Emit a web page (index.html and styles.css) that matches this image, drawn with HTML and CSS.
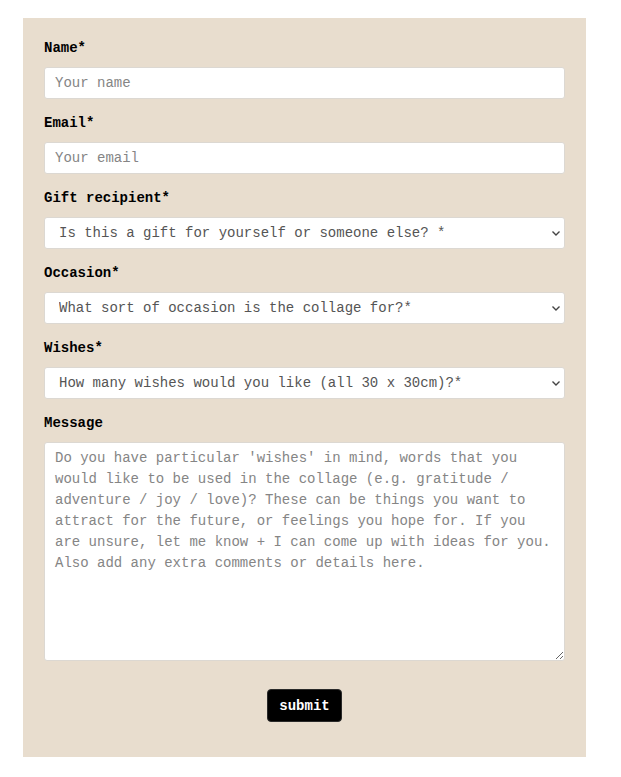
FILE: index.html
```html
<!DOCTYPE html>
<html lang="en">
<head>
<meta charset="utf-8">
<title>Collage order form</title>
<link rel="stylesheet" href="styles.css">
</head>
<body>
<div class="page">
  <form class="order-form">
    <div class="field">
      <label class="label" for="name">Name*</label>
      <input class="control" id="name" type="text" placeholder="Your name">
    </div>
    <div class="field">
      <label class="label" for="email">Email*</label>
      <input class="control" id="email" type="email" placeholder="Your email">
    </div>
    <div class="field">
      <label class="label" for="recipient">Gift recipient*</label>
      <div class="select-wrap">
        <select class="control select" id="recipient">
          <option>Is this a gift for yourself or someone else? *</option>
        </select>
        <svg class="chevron" width="8" height="5" viewBox="0 0 8 5"><path d="M0.5 0.5 L4 4 L7.5 0.5" fill="none" stroke="#444" stroke-width="1.4"/></svg>
      </div>
    </div>
    <div class="field">
      <label class="label" for="occasion">Occasion*</label>
      <div class="select-wrap">
        <select class="control select" id="occasion">
          <option>What sort of occasion is the collage for?*</option>
        </select>
        <svg class="chevron" width="8" height="5" viewBox="0 0 8 5"><path d="M0.5 0.5 L4 4 L7.5 0.5" fill="none" stroke="#444" stroke-width="1.4"/></svg>
      </div>
    </div>
    <div class="field">
      <label class="label" for="wishes">Wishes*</label>
      <div class="select-wrap">
        <select class="control select" id="wishes">
          <option>How many wishes would you like (all 30 x 30cm)?*</option>
        </select>
        <svg class="chevron" width="8" height="5" viewBox="0 0 8 5"><path d="M0.5 0.5 L4 4 L7.5 0.5" fill="none" stroke="#444" stroke-width="1.4"/></svg>
      </div>
    </div>
    <div class="field">
      <label class="label" for="message">Message</label>
      <textarea class="control textarea" id="message" placeholder="Do you have particular 'wishes' in mind, words that you would like to be used in the collage (e.g. gratitude / adventure / joy / love)? These can be things you want to attract for the future, or feelings you hope for. If you are unsure, let me know + I can come up with ideas for you. Also add any extra comments or details here."></textarea>
    </div>
    <div class="actions">
      <button class="submit" type="submit">submit</button>
    </div>
  </form>
</div>
</body>
</html>
```

FILE: styles.css
```css
html, body {
  margin: 0;
  padding: 0;
  background: #ffffff;
}

body {
  font-family: "Liberation Mono", "Courier New", monospace;
  font-size: 14px;
  color: #000;
}

.page {
  padding: 18px 35px 20px 23px;
}

.order-form {
  width: 563px;
  box-sizing: border-box;
  background: #e8ddce;
  padding: 22px 21px 35px 21px;
  display: flex;
  flex-direction: column;
}

.field {
  display: flex;
  flex-direction: column;
  margin-bottom: 16px;
}

.label {
  display: block;
  font-weight: bold;
  font-size: 14px;
  line-height: 16px;
  margin-bottom: 11px;
  color: #000;
}

.control {
  box-sizing: border-box;
  width: 100%;
  height: 32px;
  margin: 0;
  border: 1px solid #dcd8d2;
  border-radius: 3px;
  background: #ffffff;
  font-family: "Liberation Mono", "Courier New", monospace;
  font-size: 14px;
  color: #444;
  padding: 0 10px;
  outline: none;
}

.control::placeholder {
  color: #858585;
}

.select-wrap {
  position: relative;
}

.select {
  appearance: none;
  -webkit-appearance: none;
  padding: 0 30px 0 14px;
  color: #555;
}

.chevron {
  position: absolute;
  right: 5px;
  top: 14px;
  pointer-events: none;
}

.textarea {
  height: 219px;
  padding: 5px 8px 2px 10px;
  line-height: 21px;
  resize: vertical;
}

.actions {
  display: flex;
  justify-content: center;
  margin-top: 12px;
}

.submit {
  height: 33px;
  padding: 0 11px;
  background: #000;
  color: #fff;
  border: 1px solid #2a2a2a;
  border-radius: 4px;
  font-family: "Liberation Mono", "Courier New", monospace;
  font-weight: bold;
  font-size: 14px;
  cursor: pointer;
}
```
